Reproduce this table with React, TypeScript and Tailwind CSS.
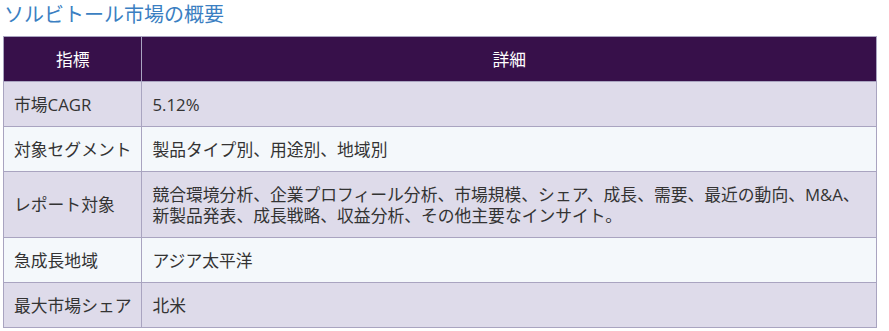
const rows: [string, string[]][] = [
  ['市場CAGR', ['5.12%']],
  ['対象セグメント', ['製品タイプ別、用途別、地域別']],
  [
    'レポート対象',
    [
      '競合環境分析、企業プロフィール分析、市場規模、シェア、成長、需要、最近の動向、M&A、',
      '新製品発表、成長戦略、収益分析、その他主要なインサイト。',
    ],
  ],
  ['急成長地域', ['アジア太平洋']],
  ['最大市場シェア', ['北米']],
];

export default function App() {
  return (
    <div
      className="w-[889px] h-[331px] bg-white overflow-hidden pl-[3px] pt-[1px]"
      style={{ fontFamily: '"Open Sans", "Noto Sans CJK JP", sans-serif' }}
    >
      <h2 className="text-[20px] leading-[28px] text-[#3b7fc2] pl-[1px] mb-[7px]">
        ソルビトール市場の概要
      </h2>
      <table className="w-[874px] border-collapse text-[16.8px] leading-[21px] text-[#333]">
        <thead>
          <tr className="bg-[#37104a] text-white h-[45px]">
            <th className="w-[138px] border border-[#a9a4c0] font-normal text-center">
              指標
            </th>
            <th className="border border-[#a9a4c0] font-normal text-center">詳細</th>
          </tr>
        </thead>
        <tbody>
          {rows.map(([label, lines], i) => (
            <tr key={label} className={i % 2 === 0 ? 'bg-[#dedbea]' : 'bg-[#f4f8fb]'}>
              <td className="border border-[#a9a4c0] px-[10px] py-[11.5px] align-middle whitespace-nowrap">
                {label}
              </td>
              <td className="border border-[#a9a4c0] px-[10px] py-[11.5px]">
                {lines.map((l) => (
                  <div key={l}>{l}</div>
                ))}
              </td>
            </tr>
          ))}
        </tbody>
      </table>
    </div>
  );
}
